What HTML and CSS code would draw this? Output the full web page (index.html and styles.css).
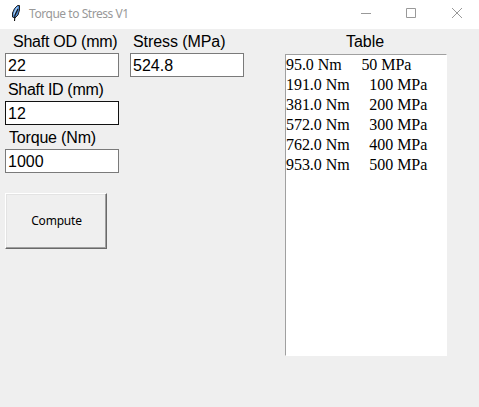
FILE: index.html
```html
<!DOCTYPE html>
<html lang="en">
<head>
<meta charset="utf-8">
<title>Torque to Stress V1</title>
<link rel="stylesheet" href="styles.css">
</head>
<body>
<header class="titlebar">
  <svg class="feather" width="12" height="18" viewBox="0 0 12 18">
    <path d="M7.5 1.5 L9.5 1.5 L9.5 6 L8 11 L5 14 L2.5 13 L2.5 9 L4.5 4.5 Z" fill="#4a86cf" stroke="#222" stroke-width="1"/>
    <path d="M7.5 3 L5 7.5 L4 11" fill="none" stroke="#a9d0f5" stroke-width="1.3"/>
    <path d="M8 5 L5 11 L4.5 17" fill="none" stroke="#111" stroke-width="1.1"/>
  </svg>
  <span class="title">Torque to Stress V1</span>
  <svg class="controls" width="106" height="12" viewBox="0 0 106 12" fill="none" stroke="#999">
    <path d="M1 6.5H11M46.5 1.5h9v9h-9zM92 1l10 10M102 1l-10 10"/>
  </svg>
</header>
<main class="content">
  <section class="inputs">
    <label class="label od" for="od">Shaft OD (mm)</label>
    <input class="entry" id="od" value="22">
    <label class="label id" for="id">Shaft ID (mm)</label>
    <input class="entry active" id="id" value="12">
    <label class="label torque" for="torque">Torque (Nm)</label>
    <input class="entry" id="torque" value="1000">
    <button class="compute">Compute</button>
  </section>
  <section class="result">
    <label class="label stress" for="stress">Stress (MPa)</label>
    <input class="entry" id="stress" value="524.8">
  </section>
  <section class="table">
    <div class="label heading">Table</div>
    <pre class="list">95.0 Nm     50 MPa
191.0 Nm     100 MPa
381.0 Nm     200 MPa
572.0 Nm     300 MPa
762.0 Nm     400 MPa
953.0 Nm     500 MPa</pre>
  </section>
</main>
</body>
</html>
```
FILE: styles.css
```css
* { box-sizing: border-box; }
body {
  margin: 0;
  height: 407px;
  overflow: hidden;
  background: #efefef;
  color: #000;
  font-family: "Liberation Sans", Arial, sans-serif;
  font-size: 16px;
}
.titlebar {
  display: flex;
  align-items: center;
  height: 29px;
  padding: 0 13px 3px 10px;
  background: #fff;
}
.feather { margin-right: 7px; }
.title {
  padding-top: 2px;
  color: #999;
  font: 12px/16px "Noto Sans", "Open Sans", sans-serif;
  letter-spacing: -0.45px;
  white-space: nowrap;
}
.controls { margin-left: auto; }
.content {
  display: flex;
  align-items: flex-start;
  padding-left: 5px;
}
.inputs { width: 114px; }
.result { width: 114px; margin-left: 11px; }
.table { width: 162px; margin-left: 41px; }
.label {
  display: block;
  height: 24px;
  padding-top: 1px;
  line-height: 24px;
  white-space: nowrap;
}
.od { padding-left: 8px; letter-spacing: -0.24px; }
.id { padding-left: 3px; letter-spacing: -0.32px; }
.torque { padding-left: 4px; letter-spacing: -0.18px; }
.stress { padding-left: 3px; letter-spacing: -0.08px; }
.heading { height: 25px; padding-right: 2px; text-align: center; }
.entry {
  display: block;
  width: 114px;
  height: 24px;
  margin: 0;
  padding: 1px 2px 0;
  border: 1px solid #7a7a7a;
  border-radius: 0;
  outline: none;
  background: #fff;
  color: #000;
  font: 16px/21px "Liberation Sans", Arial, sans-serif;
}
.entry.active { border-color: #111; }
.compute {
  display: block;
  width: 102px;
  height: 56px;
  margin-top: 20px;
  padding: 0 0 1px 1px;
  border: 1px solid;
  border-color: #fff #696969 #696969 #fff;
  border-radius: 0;
  background: #efefef;
  box-shadow: inset -1px -1px #a0a0a0, inset 1px 1px #e3e3e3;
  color: #000;
  font: 12px "Noto Sans", "Open Sans", sans-serif;
  letter-spacing: -0.2px;
}
.list {
  height: 302px;
  margin: 0;
  border: 1px solid;
  border-color: #a0a0a0 #fff #fff #a0a0a0;
  background: #fff;
  font: 16px/20px "Liberation Serif", "Times New Roman", serif;
  letter-spacing: -0.05px;
}
```
